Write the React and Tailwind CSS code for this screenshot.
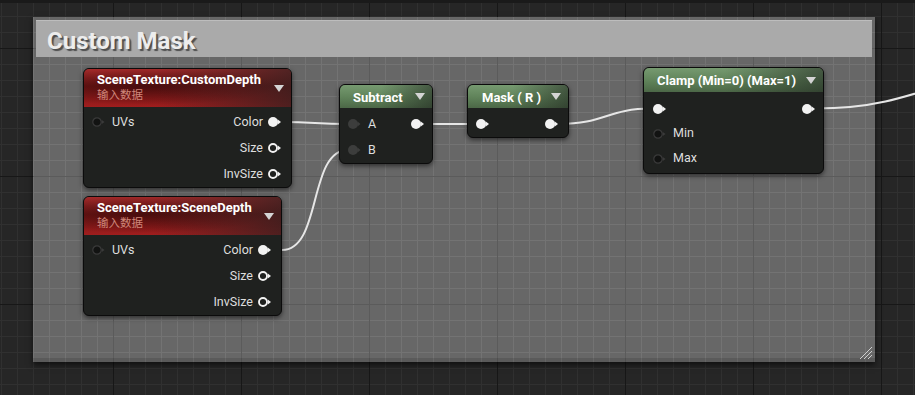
import React from 'react';

// grid backgrounds (fixed attachment so page + comment grids line up)
const pageGrid =
  "bg-[#262626] bg-[linear-gradient(to_right,#171717_1px,transparent_1px),linear-gradient(to_bottom,#171717_1px,transparent_1px),linear-gradient(to_right,#303030_1px,transparent_1px),linear-gradient(to_bottom,#303030_1px,transparent_1px)] [background-size:128px_128px,128px_128px,16px_16px,16px_16px] [background-position:113px_48px,113px_48px,1px_0px,1px_0px] bg-fixed";
const commentGrid =
  "bg-[#676767] bg-[linear-gradient(to_right,#5b5b5b_1px,transparent_1px),linear-gradient(to_bottom,#5b5b5b_1px,transparent_1px),linear-gradient(to_right,#737373_1px,transparent_1px),linear-gradient(to_bottom,#737373_1px,transparent_1px)] [background-size:128px_128px,128px_128px,16px_16px,16px_16px] [background-position:113px_48px,113px_48px,1px_0px,1px_0px] bg-fixed";

const redHeader =
  "bg-[linear-gradient(to_right,rgba(0,0,0,0)_35%,rgba(45,32,32,0.7)_100%),radial-gradient(ellipse_at_30%_45%,rgba(0,0,0,0.4),rgba(0,0,0,0)_65%),linear-gradient(to_bottom,#a82b2b_0%,#761515_45%,#8e1a1a_80%,#a01e1e_100%)]";
const greenHeader =
  "bg-[linear-gradient(to_right,rgba(0,0,0,0)_45%,rgba(30,36,30,0.55)_100%),linear-gradient(to_bottom,#769a70_0%,#5f8259_55%,#4c6847_100%)]";

function Pin({ kind }) {
  return (
    <svg width="15" height="12" viewBox="0 0 15 12" className="shrink-0">
      {kind === 'filled' && (
        <>
          <circle cx="6" cy="6" r="5" fill="#f2f2f2" />
          <path d="M10.5 3.3 L14 6 L10.5 8.7 Z" fill="#f2f2f2" />
        </>
      )}
      {kind === 'ring' && (
        <>
          <circle cx="6" cy="6" r="4" fill="#1f211f" stroke="#f2f2f2" strokeWidth="1.9" />
          <path d="M10.8 3.5 L14 6 L10.8 8.5 Z" fill="#f2f2f2" />
        </>
      )}
      {kind === 'empty' && (
        <>
          <circle cx="6" cy="6" r="4.2" fill="#121312" stroke="#3a3a3a" strokeWidth="1.2" />
          <path d="M10.8 4 L13.5 6 L10.8 8 Z" fill="#3a3a3a" />
        </>
      )}
      {kind === 'dim' && (
        <>
          <circle cx="6" cy="6" r="5" fill="#3c3d3c" />
          <path d="M10.5 3.6 L13.5 6 L10.5 8.4 Z" fill="#3c3d3c" />
        </>
      )}
    </svg>
  );
}

function Node({ pos, header, headerCls, title, subtitle, titleCls, bodyCls, rowCls, inputs, outputs }) {
  return (
    <div className={`absolute flex flex-col overflow-hidden rounded-[6px] border border-[#0b0b0b] bg-[#1f211f] shadow-[0_2px_5px_rgba(0,0,0,0.55)] ${pos}`}>
      <div className={`flex justify-between pr-[7px] ${header} ${headerCls}`}>
        <div className={`flex flex-col ${titleCls}`}>
          <span className="whitespace-nowrap text-[13px] font-bold leading-[14px] text-white">{title}</span>
          {subtitle && (
            <span className="mt-[1px] text-[11.5px] leading-[15px] text-[#d0877a]">{subtitle}</span>
          )}
        </div>
        <svg width="10" height="7" viewBox="0 0 10 7" className="shrink-0 self-center">
          <path d="M0 0 L10 0 L5 7 Z" fill="#d4d4d4" />
        </svg>
      </div>
      <div className={`flex justify-between ${bodyCls}`}>
        <div className="flex flex-col">
          {inputs.map((p, i) => (
            <div key={i} className={`flex items-center gap-[6px] ${rowCls}`}>
              <Pin kind={p.kind} />
              {p.label && <span className="text-[12.5px] text-[#dedede]">{p.label}</span>}
            </div>
          ))}
        </div>
        <div className="flex flex-col items-end">
          {outputs.map((p, i) => (
            <div key={i} className={`flex items-center gap-[4px] ${rowCls}`}>
              {p.label && <span className="text-[12.5px] text-[#dedede]">{p.label}</span>}
              <Pin kind={p.kind} />
            </div>
          ))}
        </div>
      </div>
    </div>
  );
}

const wires = [
  'M282 122 C315 122 315 124 348 124',
  'M282 250 C322 250 308 150 348 150',
  'M424 124 L476 124',
  'M559 124 C605 124 607 108.5 652 108.5',
  'M815 108.5 C872 108.5 900 99 965 78',
];

export default function App() {
  return (
    <div className={`relative h-[395px] w-[915px] overflow-hidden font-[Roboto,'Noto_Sans_CJK_SC',sans-serif] ${pageGrid}`}>
      <div className="absolute inset-x-0 top-0 h-[3px] bg-[#1a1a1a]" />

      {/* comment box */}
      <div className={`absolute left-[33px] top-[17px] flex h-[345px] w-[842px] flex-col p-[3px] shadow-[0_3px_6px_rgba(0,0,0,0.6),inset_0_-4px_0_rgba(0,0,0,0.12)] ${commentGrid}`}>
        <div className="flex h-[37px] items-center border-t border-[#bdbdbd] bg-[#aaaaaa] pl-[11px] pt-[3px]">
          <span className="text-[24px] font-bold leading-none text-[#ededed] [text-shadow:2px_2px_1px_rgba(0,0,0,0.55)]">
            Custom Mask
          </span>
        </div>
        <svg width="14" height="14" viewBox="0 0 14 14" className="absolute bottom-[2px] right-[2px]">
          <path d="M13 1 L1 13 M13 5 L5 13 M13 9 L9 13" stroke="#cfcfcf" strokeWidth="1" />
        </svg>
      </div>

      <svg className="absolute inset-0" width="915" height="395">
        {wires.map((d, i) => (
          <path key={i} d={d} fill="none" stroke="#e6e6e6" strokeWidth="2" />
        ))}
      </svg>

      <Node
        pos="left-[83px] top-[68px] w-[209px] h-[120px]"
        header={redHeader}
        headerCls="h-[38px] items-start"
        titleCls="pl-[13px] pt-[4px]"
        title="SceneTexture:CustomDepth"
        subtitle="输入数据"
        bodyCls="pl-[7px] pr-[9px] pt-[2px]"
        rowCls="h-[26px]"
        inputs={[{ label: 'UVs', kind: 'empty' }]}
        outputs={[
          { label: 'Color', kind: 'filled' },
          { label: 'Size', kind: 'ring' },
          { label: 'InvSize', kind: 'ring' },
        ]}
      />
      <Node
        pos="left-[83px] top-[196px] w-[199px] h-[120px]"
        header={redHeader}
        headerCls="h-[38px] items-start"
        titleCls="pl-[13px] pt-[4px]"
        title="SceneTexture:SceneDepth"
        subtitle="输入数据"
        bodyCls="pl-[7px] pr-[9px] pt-[2px]"
        rowCls="h-[26px]"
        inputs={[{ label: 'UVs', kind: 'empty' }]}
        outputs={[
          { label: 'Color', kind: 'filled' },
          { label: 'Size', kind: 'ring' },
          { label: 'InvSize', kind: 'ring' },
        ]}
      />
      <Node
        pos="left-[339px] top-[84px] w-[94px] h-[80px]"
        header={greenHeader}
        headerCls="h-[23px] items-center"
        titleCls="pl-[13px] pt-[2px]"
        title="Subtract"
        bodyCls="pl-[7px] pr-[7px] pt-[3px]"
        rowCls="h-[26px]"
        inputs={[
          { label: 'A', kind: 'dim' },
          { label: 'B', kind: 'dim' },
        ]}
        outputs={[{ label: '', kind: 'filled' }]}
      />
      <Node
        pos="left-[467px] top-[84px] w-[102px] h-[54px]"
        header={greenHeader}
        headerCls="h-[23px] items-center"
        titleCls="pl-[14px] pt-[2px]"
        title="Mask ( R )"
        bodyCls="pl-[7px] pr-[9px] pt-[3px]"
        rowCls="h-[26px]"
        inputs={[{ label: '', kind: 'filled' }]}
        outputs={[{ label: '', kind: 'filled' }]}
      />
      <Node
        pos="left-[643px] top-[67px] w-[181px] h-[107px]"
        header={greenHeader}
        headerCls="h-[24px] items-center"
        titleCls="pl-[13px] pt-[2px]"
        title="Clamp (Min=0) (Max=1)"
        bodyCls="pl-[8px] pr-[7px] pt-[4px]"
        rowCls="h-[25px]"
        inputs={[
          { label: '', kind: 'filled' },
          { label: 'Min', kind: 'empty' },
          { label: 'Max', kind: 'empty' },
        ]}
        outputs={[{ label: '', kind: 'filled' }]}
      />
    </div>
  );
}
